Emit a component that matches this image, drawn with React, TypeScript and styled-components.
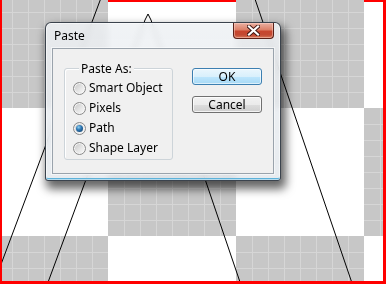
import React from 'react'
import styled, { createGlobalStyle } from 'styled-components'

const GlobalStyle = createGlobalStyle`
  html, body {
    margin: 0;
    padding: 0;
    background: #fff;
  }
  body {
    font-family: 'Segoe UI', 'Noto Sans', 'Liberation Sans', sans-serif;
    font-size: 12px;
    color: #000;
  }
`

const Canvas = styled.div`
  position: relative;
  width: 386px;
  height: 284px;
  overflow: hidden;
  background: #fff;

  svg {
    display: block;
  }
`

const Dialog = styled.div`
  position: absolute;
  left: 45px;
  top: 22px;
  width: 236px;
  height: 159px;
  box-sizing: border-box;
  display: flex;
  flex-direction: column;
  padding: 0 6px 6px 6px;
  border: 1px solid rgba(28, 38, 48, 0.85);
  border-radius: 6px 6px 3px 3px;
  background: linear-gradient(180deg, rgba(238, 241, 244, 0.84) 0%, rgba(226, 231, 236, 0.82) 100%);
  backdrop-filter: blur(3px);
  box-shadow:
    inset 0 0 0 1px rgba(255, 255, 255, 0.55),
    inset 0 -2px 0 #5db2da,
    3px 6px 10px 2px rgba(0, 0, 0, 0.6);
`

const TitleBar = styled.div`
  height: 25px;
  flex: none;
  display: flex;
  align-items: center;
  justify-content: space-between;
  padding-left: 2px;
`

const Title = styled.span`
  line-height: 16px;
  margin-top: 1px;
`

const CloseButton = styled.div`
  align-self: flex-start;
  width: 41px;
  height: 16px;
  box-sizing: border-box;
  display: flex;
  align-items: center;
  justify-content: center;
  border: 1px solid #5a2018;
  border-top: none;
  border-radius: 0 0 4px 4px;
  background: linear-gradient(180deg, #eab0a2 0%, #dc8068 45%, #c8452e 55%, #c24a33 80%, #d87a5c 100%);
  box-shadow: inset 0 0 0 1px rgba(255, 220, 210, 0.45);
`

const ClientArea = styled.div`
  flex: 1;
  box-sizing: border-box;
  display: flex;
  align-items: flex-start;
  gap: 19px;
  padding: 19px 11px 0 11px;
  background: #f0f0f0;
  border: 1px solid #9aa3ac;
  box-shadow: 0 0 0 1px rgba(255, 255, 255, 0.5);
`

const GroupBox = styled.div`
  position: relative;
  width: 109px;
  height: 92px;
  box-sizing: border-box;
  border: 1px solid #cdd4d9;
  border-radius: 3px;
  box-shadow: inset 1px 1px 0 #fff;
  padding: 9px 0 0 8px;
  display: flex;
  flex-direction: column;
`

const Legend = styled.span`
  position: absolute;
  left: 14px;
  top: -8px;
  padding: 0 2px;
  line-height: 16px;
  background: #f0f0f0;
`

const RadioRow = styled.label`
  height: 20px;
  display: flex;
  align-items: center;
  gap: 3px;
  line-height: 16px;
  white-space: nowrap;
`

const RadioCircle = styled.span<{ $checked?: boolean }>`
  width: 13px;
  height: 13px;
  box-sizing: border-box;
  flex: none;
  border-radius: 50%;
  border: 1px solid #8a8a8a;
  background: linear-gradient(135deg, #c4c4c4 0%, #e6e6e6 55%, #fbfbfb 100%);
  box-shadow: inset 0 0 0 1px #f6f6f6;
  display: flex;
  align-items: center;
  justify-content: center;

  &::after {
    content: '';
    display: ${(p) => (p.$checked ? 'block' : 'none')};
    width: 7px;
    height: 7px;
    border-radius: 50%;
    background: radial-gradient(circle at 38% 32%, #8fd0f0 0%, #2f78b4 40%, #0e3760 100%);
  }
`

const ButtonColumn = styled.div`
  display: flex;
  flex-direction: column;
  gap: 11px;
`

const Button = styled.div<{ $default?: boolean }>`
  width: 70px;
  height: 17px;
  box-sizing: border-box;
  display: flex;
  align-items: center;
  justify-content: center;
  line-height: 16px;
  border-radius: 3px;
  border: 1px solid ${(p) => (p.$default ? '#3c7fb1' : '#707070')};
  background: ${(p) =>
    p.$default
      ? 'linear-gradient(180deg, #eaf6fd 0%, #d9f0fc 50%, #bee6fd 51%, #a7d9f5 100%)'
      : 'linear-gradient(180deg, #f2f2f2 0%, #ebebeb 50%, #dddddd 51%, #cfcfcf 100%)'};
  box-shadow: inset 0 0 0 1px ${(p) => (p.$default ? 'rgba(255,255,255,0.6)' : 'rgba(255,255,255,0.75)')};
`

const options = [
  { label: 'Smart Object', checked: false },
  { label: 'Pixels', checked: false },
  { label: 'Path', checked: true },
  { label: 'Shape Layer', checked: false },
]

// light subdivision lines inside each gray square of the canvas
const gridLines = () => {
  const out: React.ReactNode[] = []
  const quads = [
    [128, 0],
    [0, 128],
  ]
  quads.forEach(([qx, qy], q) => {
    for (let k = 1; k < 8; k++) {
      out.push(<rect key={`v${q}-${k}`} x={qx + 16 * k} y={qy} width={1} height={128} fill="#d6d6d6" />)
      out.push(<rect key={`h${q}-${k}`} x={qx} y={qy + 16 * k} width={128} height={1} fill="#d6d6d6" />)
    }
  })
  return out
}

const Artwork: React.FC = () => (
  <svg width={386} height={284} viewBox="0 0 386 284">
    <defs>
      <pattern id="checker" x={108} y={-20} width={256} height={256} patternUnits="userSpaceOnUse">
        <rect x={128} y={0} width={128} height={128} fill="#c7c7c7" />
        <rect x={0} y={128} width={128} height={128} fill="#c7c7c7" />
        {gridLines()}
      </pattern>
    </defs>
    <rect x={0} y={0} width={386} height={284} fill="#fff" />
    <rect x={0} y={0} width={386} height={2} fill="#ff0000" />
    <rect x={0} y={0} width={386} height={284} fill="url(#checker)" />
    <g stroke="#000" strokeWidth={1} fill="none" strokeLinejoin="miter">
      <path d="M101 -2 L0 267" />
      <path d="M47 285 L145 20 L148 14 L151 20 L241 285" />
      <path d="M255 -1 L353 286" />
    </g>
    <rect x={0} y={0} width={2} height={284} fill="#ff0000" />
    <rect x={383} y={0} width={3} height={284} fill="#ff0000" />
    <rect x={0} y={281} width={386} height={3} fill="#ff0000" />
  </svg>
)

const CloseGlyph: React.FC = () => (
  <svg width={13} height={11} viewBox="0 0 13 11">
    <path d="M2 1.5 L11 9.5 M11 1.5 L2 9.5" stroke="#3c1410" strokeWidth={4} strokeLinecap="square" />
    <path d="M2 1.5 L11 9.5 M11 1.5 L2 9.5" stroke="#fff" strokeWidth={2.2} strokeLinecap="square" />
  </svg>
)

const App: React.FC = () => (
  <>
    <GlobalStyle />
    <Canvas>
      <Artwork />
      <Dialog>
        <TitleBar>
          <Title>Paste</Title>
          <CloseButton>
            <CloseGlyph />
          </CloseButton>
        </TitleBar>
        <ClientArea>
          <GroupBox>
            <Legend>Paste As:</Legend>
            {options.map((o) => (
              <RadioRow key={o.label}>
                <RadioCircle $checked={o.checked} />
                {o.label}
              </RadioRow>
            ))}
          </GroupBox>
          <ButtonColumn>
            <Button $default>OK</Button>
            <Button>Cancel</Button>
          </ButtonColumn>
        </ClientArea>
      </Dialog>
    </Canvas>
  </>
)

export default App
